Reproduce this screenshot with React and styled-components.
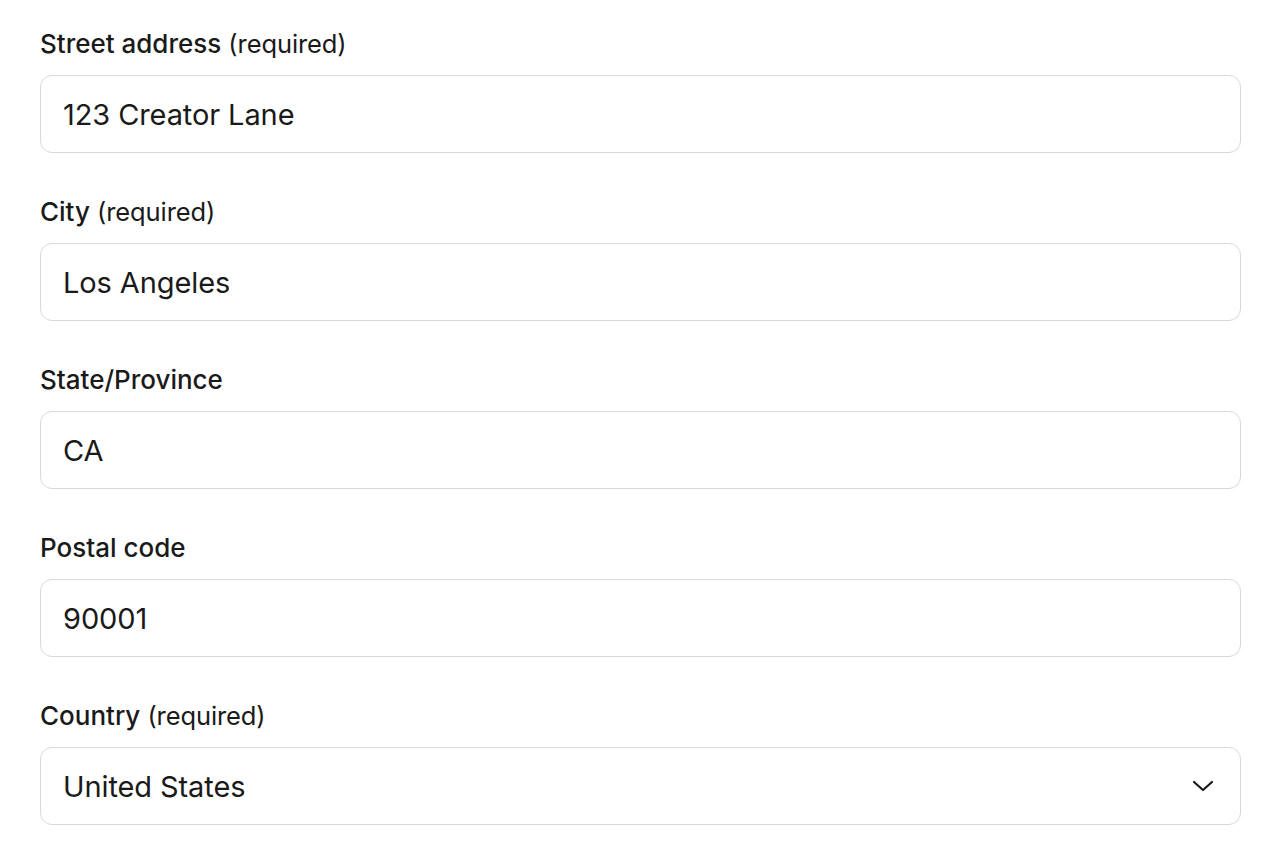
import React from 'react';
import styled, { createGlobalStyle } from 'styled-components';

const GlobalStyle = createGlobalStyle`
  body {
    margin: 0;
    background: #ffffff;
    font-family: Inter, "Noto Sans", sans-serif;
    color: #1a1a1a;
  }
`;

const Form = styled.form`
  display: flex;
  flex-direction: column;
  gap: 44px;
  padding: 29px 39px 0 40px;
`;

const Field = styled.div`
  display: flex;
  flex-direction: column;
  gap: 16px;
`;

const Label = styled.label`
  font-size: 26px;
  line-height: 30px;
  font-weight: 500;
  color: #1a1a1a;

  span {
    font-size: 25.5px;
    font-weight: 400;
    letter-spacing: -0.1px;
  }
`;

const Box = styled.div`
  position: relative;
  display: flex;
  align-items: center;
  height: 78px;
  box-sizing: border-box;
  border: 1.5px solid #d6d8db;
  border-radius: 12px;
  padding: 0 22px;
  background: #fff;
`;

const Input = styled.input`
  border: none;
  outline: none;
  width: 100%;
  padding: 0;
  font-family: inherit;
  font-size: 29px;
  color: #1a1a1a;
  background: transparent;
  letter-spacing: -0.1px;
`;

const Chevron = styled.svg`
  position: absolute;
  right: 26px;
  top: 50%;
  transform: translateY(-50%);
`;

const fields = [
  { label: 'Street address', required: true, value: '123 Creator Lane' },
  { label: 'City', required: true, value: 'Los Angeles' },
  { label: 'State/Province', value: 'CA' },
  { label: 'Postal code', value: '90001' },
  { label: 'Country', required: true, value: 'United States', select: true },
];

export default function App() {
  return (
    <>
      <GlobalStyle />
      <Form>
        {fields.map((f) => (
          <Field key={f.label}>
            <Label>
              {f.label}
              {f.required && <span> (required)</span>}
            </Label>
            <Box>
              <Input defaultValue={f.value} readOnly={f.select} />
              {f.select && (
                <Chevron width="22" height="14" viewBox="0 0 22 14" fill="none">
                  <path d="M2 3l9 8 9-8" stroke="#1a1a1a" strokeWidth="2.2" strokeLinecap="round" strokeLinejoin="round" />
                </Chevron>
              )}
            </Box>
          </Field>
        ))}
      </Form>
    </>
  );
}
